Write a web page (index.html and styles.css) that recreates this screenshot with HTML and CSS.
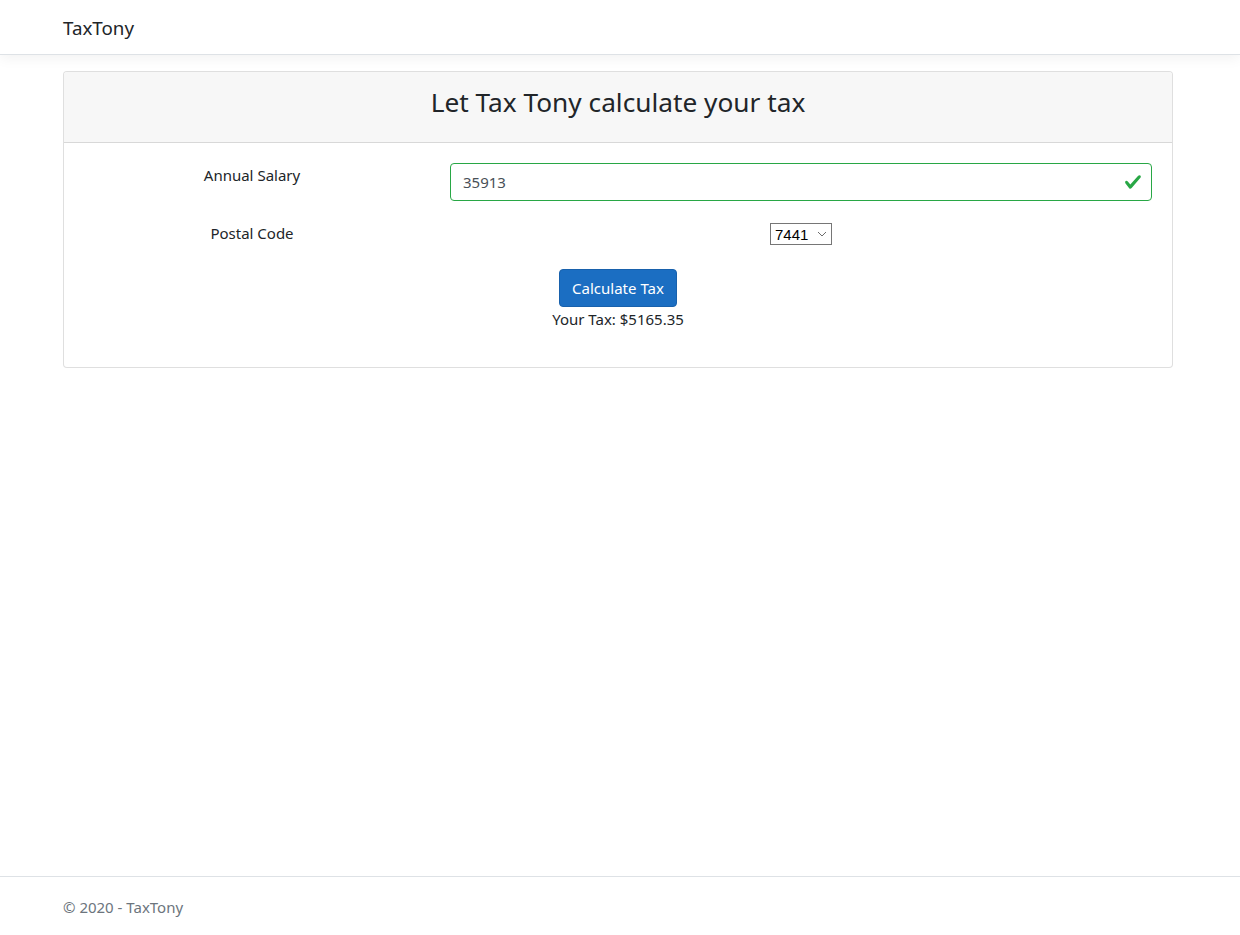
FILE: index.html
```html
<!DOCTYPE html>
<html lang="en">
<head>
<meta charset="utf-8">
<title>TaxTony</title>
<link rel="stylesheet" href="styles.css">
</head>
<body>
<header class="navbar">
  <div class="container">
    <a class="brand" href="#">TaxTony</a>
  </div>
</header>
<main class="main">
  <div class="container">
    <div class="card">
      <div class="card-header">
        <h2 class="card-title">Let Tax Tony calculate your tax</h2>
      </div>
      <div class="card-body">
        <div class="form-row">
          <label class="label-col" for="salary">Annual Salary</label>
          <div class="field-col">
            <div class="input-wrap">
              <input id="salary" class="input is-valid" type="text" value="35913">
              <svg class="valid-icon" viewBox="0 0 8 8" width="18" height="18" aria-hidden="true"><path fill="#28a745" d="M2.3 6.73L.6 4.53c-.4-1.04.46-1.4 1.1-.8l1.1 1.4 3.4-3.8c.6-.63 1.6-.27 1.2.7l-4 4.6c-.43.5-.8.4-1.1.1z"/></svg>
            </div>
          </div>
        </div>
        <div class="form-row postal-row">
          <label class="label-col" for="postal">Postal Code</label>
          <div class="field-col center">
            <span class="select-wrap">
              <select id="postal" class="select">
                <option>7441</option>
              </select>
              <svg class="select-arrow" viewBox="0 0 10 6" width="10" height="6" aria-hidden="true"><path d="M1 1l4 4 4-4" fill="none" stroke="#6d6d6d" stroke-width="1"/></svg>
            </span>
          </div>
        </div>
        <div class="actions">
          <button class="btn" type="button">Calculate Tax</button>
          <p class="result">Your Tax: $5165.35</p>
        </div>
      </div>
    </div>
  </div>
</main>
<footer class="footer">
  <div class="container">&copy; 2020 - TaxTony</div>
</footer>
</body>
</html>
```
FILE: styles.css
```css
* { box-sizing: border-box; }
html, body { margin: 0; padding: 0; }
body {
  font-family: "Noto Sans", "Open Sans", sans-serif;
  font-size: 15px;
  line-height: 24px;
  color: #212529;
  background: #fff;
  min-height: 100vh;
  display: flex;
  flex-direction: column;
}
.container {
  width: 1110px;
  margin-left: calc(50% - 557px);
}
.navbar {
  height: 55px;
  border-bottom: 1px solid #dee2e6;
  box-shadow: 0 4px 12px rgba(0,0,0,.05);
  display: flex;
  align-items: center;
}
.brand {
  font-size: 18.75px;
  line-height: 30px;
  padding-top: 2px;
  color: #212529;
  text-decoration: none;
  display: inline-block;
}
.main {
  flex: 1;
  padding-top: 16px;
}
.card {
  border: 1px solid rgba(0,0,0,.125);
  border-radius: 4px;
  background: #fff;
}
.card-header {
  background: #f7f7f7;
  border-bottom: 1px solid rgba(0,0,0,.125);
  border-radius: 3px 3px 0 0;
  padding: 12px 20px;
  text-align: center;
}
.card-title {
  margin: 0 0 8px;
  font-size: 26.25px;
  font-weight: 400;
  line-height: 38px;
  position: relative;
  top: -1px;
}
.card-body {
  padding: 20px;
}
.form-row {
  display: grid;
  grid-template-columns: 366px 1fr;
  margin: 0 -15px 16px;
}
.label-col {
  text-align: center;
  padding: 0 15px;
}
.field-col {
  padding: 0 15px;
}
.field-col.center { text-align: center; }
.postal-row {
  height: 36px;
  align-items: start;
}
.postal-row .label-col { padding-top: 4px; }
.postal-row .field-col { padding-top: 6px; }
.input-wrap { position: relative; }
.input {
  display: block;
  width: 100%;
  height: 38px;
  padding: 6px 36px 6px 12px;
  font-family: inherit;
  font-size: 15px;
  line-height: 24px;
  color: #495057;
  background: #fff;
  border: 1px solid #ced4da;
  border-radius: 4px;
  outline: none;
}
.input.is-valid { border-color: #28a745; }
.valid-icon {
  position: absolute;
  right: 10px;
  top: 10px;
}
.select-wrap {
  position: relative;
  display: inline-block;
  vertical-align: top;
  line-height: 0;
}
.select {
  -webkit-appearance: none;
  appearance: none;
  font-family: "Liberation Sans", Arial, sans-serif;
  font-size: 15px;
  line-height: 20px;
  height: 22px;
  width: 62px;
  padding: 1px 0 0 4px;
  color: #000;
  background: #fff;
  border: 1px solid #767676;
  border-radius: 0;
  text-align: left;
}
.select-arrow {
  position: absolute;
  right: 5px;
  top: 8px;
  pointer-events: none;
}
.actions {
  text-align: center;
}
.btn {
  font-family: inherit;
  font-size: 15px;
  line-height: 24px;
  padding: 6px 12px;
  color: #fff;
  background: #1b6ec2;
  border: 1px solid #1861ac;
  border-radius: 4px;
  cursor: pointer;
}
.result {
  margin: 0 0 16px;
}
.footer {
  border-top: 1px solid #dee2e6;
  color: #6c757d;
  line-height: 60px;
  height: 59px;
  white-space: nowrap;
}
```
